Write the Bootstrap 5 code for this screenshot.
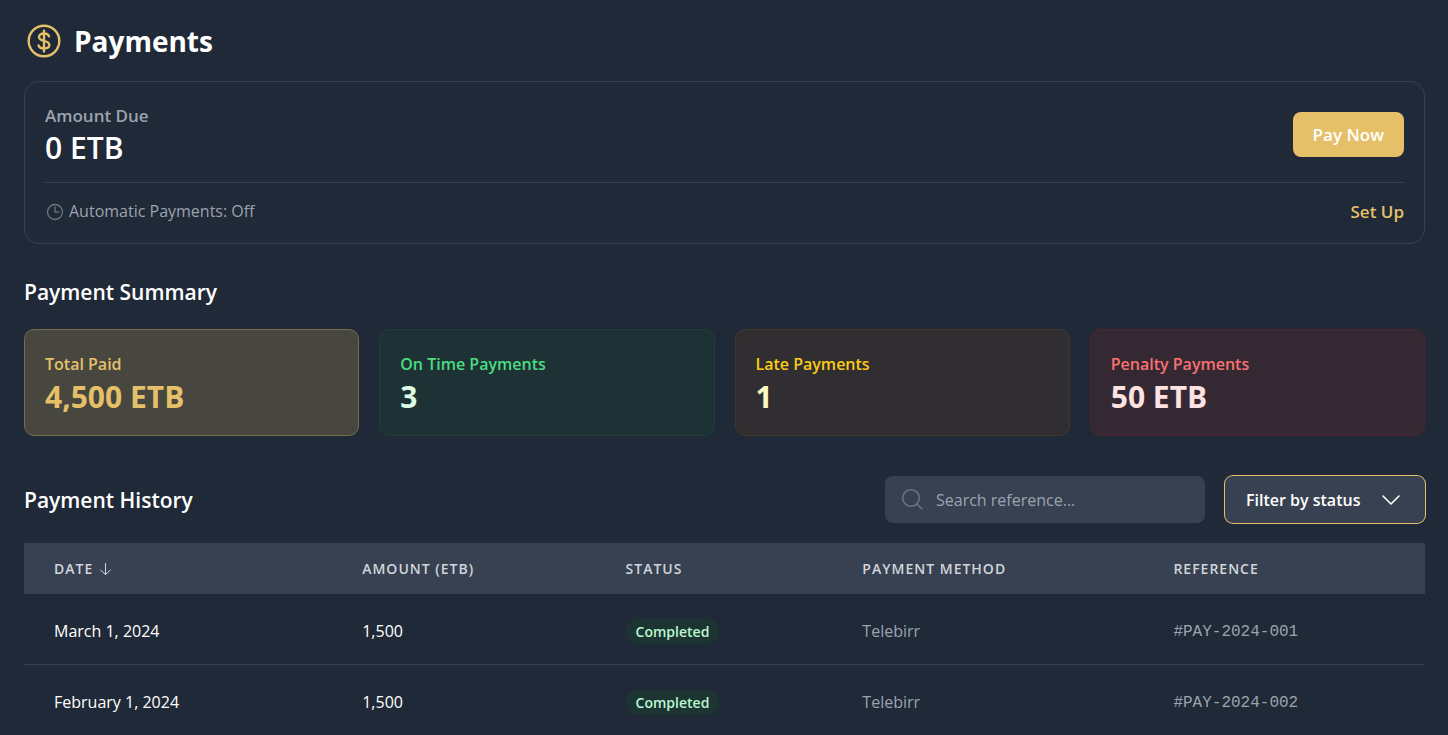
<!DOCTYPE html>
<html lang="en">
<head>
<meta charset="utf-8">
<meta name="viewport" content="width=device-width, initial-scale=1">
<title>Payments</title>
<link href="https://cdn.jsdelivr.net/npm/bootstrap@5.3.0/dist/css/bootstrap.min.css" rel="stylesheet">
<style>
:root { --page: #1f2937; --panel: #374151; --gold: #e5c069; --muted: #9ca3af; }
body { background: var(--page); color: #fff; font-family: "Open Sans", "Noto Sans", sans-serif; font-size: 16px; line-height: 25px; }
main { padding: 0 23px 0 24px; }
h1 { font-size: 28px; line-height: 38px; font-weight: 700; }
h2 { font-size: 21px; line-height: 36px; font-weight: 600; }
.gold { color: var(--gold); }
.muted { color: var(--muted); }
.page-head { padding: 21px 0 20px; gap: 10px; }
.due-card { border: 1px solid var(--panel); border-radius: 15px; padding: 20px 20px 19px; }
.due-label { font-size: 17px; font-weight: 600; }
.figure-label { line-height: 27px; font-weight: 600; }
.figure-text { font-size: 30px; line-height: 38px; }
.due-split { border-top: 1px solid var(--panel); margin-top: 15px; padding-top: 16px; }
.btn-pay { background: var(--gold); color: #fff; font-size: 17px; line-height: 25px; font-weight: 600; padding: 10px 20px; border: 0; border-radius: 8px; }
.btn-pay:hover { background: #d8b359; color: #fff; }
.clock { color: #6b7280; }
.section-title { margin: 30px 0 19px; }
.tiles { display: grid; grid-template-columns: repeat(4, 1fr); gap: 20px; }
.tile { border: 1px solid; border-radius: 10px; padding: 21px 20px 19px; }
.tile-total { background: #474740; border-color: #776c4e; color: var(--gold); }
.tile-ontime { background: #1e3235; border-color: #1c4037; color: #4ade80; }
.tile-late { background: #312e31; border-color: #46362b; color: #facc15; }
.tile-penalty { background: #342833; border-color: #4e242c; color: #f87171; }
.tile-ontime .figure-text { color: #dcfce7; }
.tile-late .figure-text { color: #fef9c3; }
.tile-penalty .figure-text { color: #fee2e2; }
.history-head { margin: 40px 0 20px; }
.history-tools { gap: 20px; }
.search-box { width: 320px; height: 47px; background: var(--panel); border-radius: 8px; color: #6b7280; padding: 0 15px; gap: 11px; }
.search-box input { background: transparent; border: 0; color: #fff; outline: 0; min-width: 0; height: 40px; padding: 0; }
.search-box input::placeholder { color: var(--muted); opacity: 1; }
.status-filter { width: 200px; height: 47px; border: 0; border-radius: 8px; box-shadow: 0 0 0 1px var(--gold); color: #fff; font-size: 16px; line-height: 25px; font-weight: 600; padding: 12px 40px 10px 21px; background: var(--panel) url("data:image/svg+xml,%3Csvg xmlns='http://www.w3.org/2000/svg' viewBox='0 0 20 20' fill='none' stroke='white' stroke-width='1.6' stroke-linecap='round' stroke-linejoin='round'%3E%3Cpath d='M2 6l8 8 8-8'/%3E%3C/svg%3E") no-repeat right 24px center / 20px 20px; }
.status-filter:focus { box-shadow: 0 0 0 2px var(--gold); }
.pay-table { width: 100%; table-layout: fixed; border-collapse: separate; border-spacing: 0; }
.pay-table thead { background: var(--panel); }
.pay-table th { color: #d1d5db; font-size: 14px; line-height: 21px; font-weight: 600; letter-spacing: 1px; padding: 15px 30px; text-transform: uppercase; }
.pay-table td { padding: 4px 30px 0; height: 70px; vertical-align: middle; }
.pay-table tbody tr + tr td { border-top: 1px solid var(--panel); height: 71px; }
.col-date { width: 22%; }
.col-amount { width: 18.8%; }
.col-status { width: 16.9%; }
.col-method { width: 22.2%; }
.status-pill { background: #1c3532; color: #bbf7d0; font-size: 14px; line-height: 25px; font-weight: 600; padding: 0 10px; vertical-align: middle; }
.ref-code { font-family: "Liberation Mono", monospace; font-size: 16px; color: var(--muted); }
</style>
</head>
<body>
<main>
  <header class="d-flex align-items-center page-head">
    <svg class="gold flex-shrink-0" width="40" height="40" viewBox="0 0 40 40" fill="none" stroke="currentColor" stroke-width="2.4" stroke-linecap="round" aria-hidden="true">
      <circle cx="20" cy="20" r="15.3"/>
      <path d="M20 9.800v20.600M25 15.400c-.5-1.900-2.300-2.900-5-2.900-3 0-5 1.300-5 3.500s2 3.100 5 3.900c3.100.8 5.300 1.600 5.300 3.900 0 2.300-2.200 3.700-5.300 3.700-2.900 0-4.900-1.100-5.400-3.100"/>
    </svg>
    <h1 class="m-0">Payments</h1>
  </header>

  <section class="due-card">
    <div class="d-flex justify-content-between align-items-center">
      <div>
        <div class="muted due-label figure-label">Amount Due</div>
        <div class="figure-text fw-semibold">0 ETB</div>
      </div>
      <button type="button" class="btn btn-pay">Pay Now</button>
    </div>
    <div class="due-split d-flex justify-content-between align-items-center">
      <div class="d-flex align-items-center muted">
        <svg class="clock me-1" width="20" height="20" viewBox="0 0 20 20" fill="none" stroke="currentColor" stroke-width="1.3" stroke-linecap="round" stroke-linejoin="round" aria-hidden="true"><circle cx="10" cy="10" r="7.5"/><path d="M10 5v5.200h4"/></svg>
        Automatic Payments: Off
      </div>
      <a href="#" class="gold due-label text-decoration-none">Set Up</a>
    </div>
  </section>

  <h2 class="section-title">Payment Summary</h2>
  <section class="tiles">
    <div class="tile tile-total"><div class="figure-label">Total Paid</div><div class="figure-text fw-bold">4,500 ETB</div></div>
    <div class="tile tile-ontime"><div class="figure-label">On Time Payments</div><div class="figure-text fw-bold">3</div></div>
    <div class="tile tile-late"><div class="figure-label">Late Payments</div><div class="figure-text fw-bold">1</div></div>
    <div class="tile tile-penalty"><div class="figure-label">Penalty Payments</div><div class="figure-text fw-bold">50 ETB</div></div>
  </section>

  <div class="d-flex justify-content-between align-items-center history-head">
    <h2 class="m-0">Payment History</h2>
    <div class="d-flex history-tools">
      <label class="search-box d-flex align-items-center">
        <svg class="flex-shrink-0" width="25" height="25" viewBox="0 0 25 25" fill="none" stroke="currentColor" stroke-width="1.6" stroke-linecap="round" aria-hidden="true"><circle cx="11" cy="11" r="8.3"/><path d="M17 17l5 5"/></svg>
        <input type="text" class="flex-grow-1" placeholder="Search reference..." aria-label="Search reference">
      </label>
      <select class="form-select status-filter" aria-label="Filter by status">
        <option>Filter by status</option><option>Completed</option>
      </select>
    </div>
  </div>

  <table class="pay-table">
    <colgroup><col class="col-date"><col class="col-amount"><col class="col-status"><col class="col-method"><col></colgroup>
    <thead>
      <tr>
        <th scope="col"><span class="d-flex align-items-center">Date
          <svg class="ms-1" width="16" height="16" viewBox="0 0 16 16" fill="none" stroke="currentColor" stroke-linecap="round" stroke-linejoin="round" aria-hidden="true"><path d="M8.500 2.500v11M3.500 9l5 4.500 5-4.500"/></svg></span></th>
        <th scope="col">Amount (ETB)</th><th scope="col">Status</th><th scope="col">Payment Method</th><th scope="col">Reference</th>
      </tr>
    </thead>
    <tbody>
      <tr><td>March 1, 2024</td><td>1,500</td><td><span class="status-pill rounded-pill d-inline-block">Completed</span></td><td class="muted">Telebirr</td><td><span class="ref-code">#PAY-2024-001</span></td></tr>
      <tr><td>February 1, 2024</td><td>1,500</td><td><span class="status-pill rounded-pill d-inline-block">Completed</span></td><td class="muted">Telebirr</td><td><span class="ref-code">#PAY-2024-002</span></td></tr>
    </tbody>
  </table>
</main>
<script src="https://cdn.jsdelivr.net/npm/bootstrap@5.3.0/dist/js/bootstrap.bundle.min.js"></script>
</body>
</html>
